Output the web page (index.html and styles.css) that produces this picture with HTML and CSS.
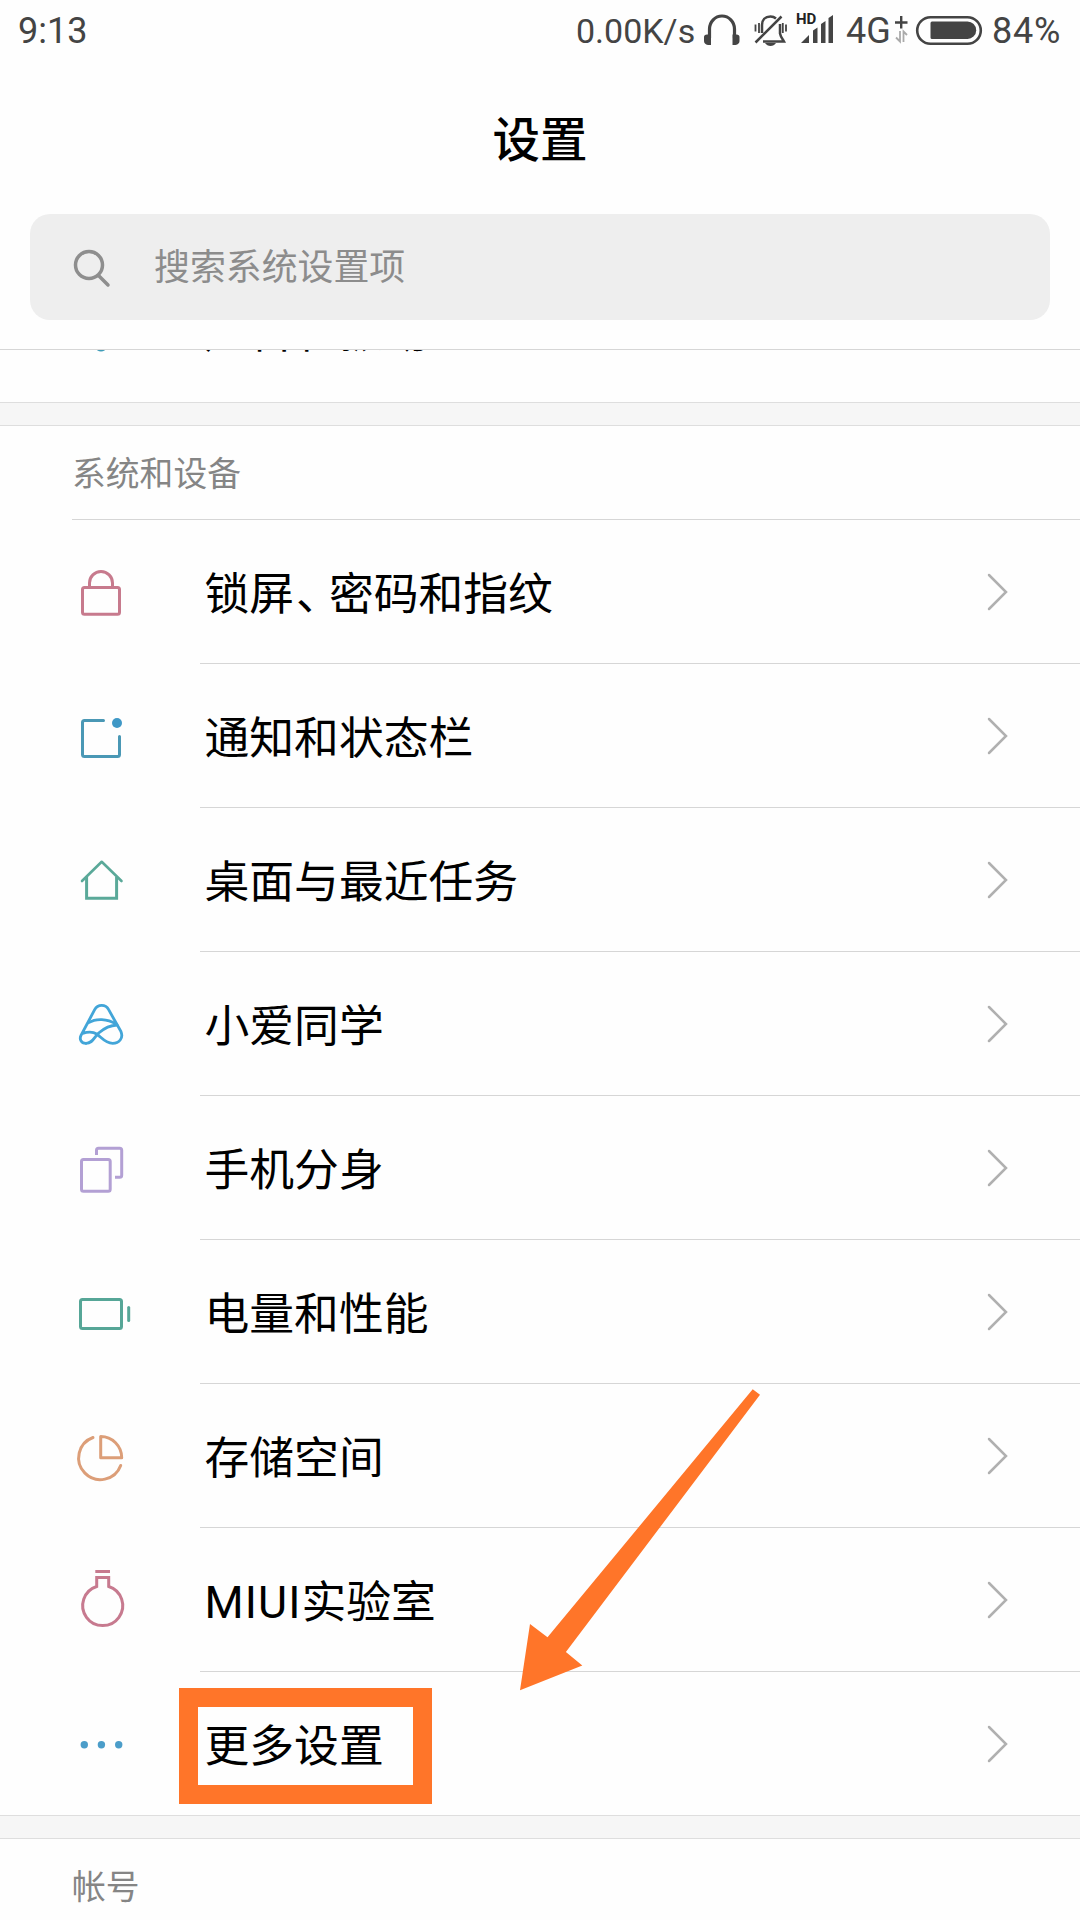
FILE: index.html
```html
<!DOCTYPE html>
<html lang="zh-CN">
<head>
<meta charset="utf-8">
<title>设置</title>
<link rel="stylesheet" href="styles.css">
</head>
<body>
<div class="screen">
  <header class="top">
    <div class="status">
      <span class="time">9:13</span>
      <span class="speed">0.00K/s</span>
      <svg class="s-head" width="44" height="60" viewBox="700 0 44 60"><path d="M709.500 38V29a12.500 13 0 0 1 25 0V38" fill="none" stroke="#444" stroke-width="3.200"/><path d="M704 37q0-2.500 3-2.500h4V45h-3q-4-1-4-4zM739.500 37q0-2.500-3-2.500h-4V45h3q4-1 4-4z" fill="#444"/></svg>
      <svg class="s-bell" width="42" height="60" viewBox="750 0 42 60"><g fill="none" stroke="#444" stroke-width="2.500"><path d="M762 33V25c0-5 3-8.500 8.500-8.500 2.500 0 4 .7 5.500 2M780 24v9.500c1 4.500 2.500 5 4 8H763M755.500 42.500 781.500 16.500"/><path d="M755.500 24.500v7M759 23v10M786 24.500v7M782.800 23v10" stroke-width="1.800"/></g><path d="M765 43h11q-2 3-5.500 3t-5.500-3z" fill="#444"/></svg>
      <svg class="s-signal" width="40" height="60" viewBox="796 0 40 60"><text class="hd" x="796" y="24">HD</text><path d="M801 43l8-8v8zM813 30.500l4.500-3V43H813zM821 24l4.500-3V43H821zM828.500 18l4.500-3V43h-4.500z" fill="#444"/></svg>
      <span class="net">4G</span>
      <svg class="s-data" width="16" height="60" viewBox="893 0 16 60"><path d="M895 22.500h12.500M901.200 16v12.500" stroke="#444" stroke-width="2.400"/><path d="M900 31v10.500l-4-4M903.500 42V31.500l3.500 3.500" fill="none" stroke="#aaa" stroke-width="1.800"/></svg>
      <svg class="s-batt" width="70" height="60" viewBox="914 0 70 60"><rect x="917.200" y="17.200" width="63.600" height="26.600" rx="13.300" fill="none" stroke="#444" stroke-width="2.600"/><path d="M932 21.500H967.500a8.700 8.700 0 0 1 0 17.400H932q-1.500 0-1.500-1.500V23q0-1.500 1.500-1.500z" fill="#444"/></svg>
      <span class="pct">84%</span>
    </div>
    <h1 class="title">设置</h1>
    <div class="search">
      <svg class="glass" width="40" height="40" viewBox="0 0 40 40" fill="none" stroke="#8e8e8e" stroke-width="3.500" stroke-linecap="round"><circle cx="17" cy="17" r="13.500"/><path d="M27 28 36 37"/></svg>
      <span class="placeholder">搜索系统设置项</span>
    </div>
  </header>

  <main class="list">
    <div class="peek">
      <div class="row">
        <svg class="icon" viewBox="0 0 60 61" fill="none" stroke="#3f9cb8" stroke-width="3" stroke-linejoin="round"><path d="M10 24h8l8-12q3-2 6 1v37q-3 2-6 0l-8-9h-8z"/></svg>
        <span class="label">声音和振动</span>
      </div>
    </div>

    <div class="gap"></div>
    <h2 class="section">系统和设备</h2>
    <div class="row">
      <svg class="icon" viewBox="0 0 60 61" fill="none" stroke="#c77a8d" stroke-width="3"><rect x="10.500" y="26.500" width="37" height="26.800" rx="2"/><path d="M17.500 26v-4a11.500 11.500 0 0 1 23 0v4"/></svg>
      <span class="label">锁屏<span class="comma">、</span>密码和指纹</span>
      <svg class="chevron" viewBox="0 0 24 40"><path d="M4 3 21 20 4 37"/></svg>
    </div>
    <div class="row">
      <svg class="icon" viewBox="0 0 60 61" fill="none" stroke="#4a98b5" stroke-width="3" stroke-linecap="round"><path d="M31.500 15.500h-19a2 2 0 0 0-2 2v32a2 2 0 0 0 2 2h33a2 2 0 0 0 2-2V31.500"/><circle cx="45" cy="18" r="5" fill="#3f98c6" stroke="none"/></svg>
      <span class="label">通知和状态栏</span>
      <svg class="chevron" viewBox="0 0 24 40"><path d="M4 3 21 20 4 37"/></svg>
    </div>
    <div class="row">
      <svg class="icon" viewBox="0 0 60 61" fill="none" stroke="#5aa999" stroke-width="3"><path d="M14.600 28v21.300h30V28"/><path d="M10 32 29.700 12.800 49.500 32" stroke-width="2.600" stroke-linecap="round" stroke-linejoin="round"/></svg>
      <span class="label">桌面与最近任务</span>
      <svg class="chevron" viewBox="0 0 24 40"><path d="M4 3 21 20 4 37"/></svg>
    </div>
    <div class="row">
      <svg class="icon" viewBox="0 0 180 183" fill="none" stroke="#42a5d8" stroke-width="8.500" stroke-linecap="round"><path d="M42 151c-16 0-20-14-15-24L68 50c9-17 33-17 42 0l37 66c8 20-6 35-25 35-22 0-34-18-48-28-12-8-26-7-42-2"/><path d="M42 151c20 0 24-18 38-31 14-12 32-23 55-24M50 89c22-14 56-12 82 4"/></svg>
      <span class="label">小爱同学</span>
      <svg class="chevron" viewBox="0 0 24 40"><path d="M4 3 21 20 4 37"/></svg>
    </div>
    <div class="row">
      <svg class="icon" viewBox="0 0 60 61" fill="none" stroke="#b3a0d4" stroke-width="3"><rect x="9.500" y="22.500" width="28.700" height="31.700" rx="2"/><path d="M24.500 18v-4.700a2 2 0 0 1 2-2h21.200a2 2 0 0 1 2 2v25a2 2 0 0 1-2 2H43"/></svg>
      <span class="label">手机分身</span>
      <svg class="chevron" viewBox="0 0 24 40"><path d="M4 3 21 20 4 37"/></svg>
    </div>
    <div class="row">
      <svg class="icon" viewBox="0 0 60 61" fill="none" stroke="#56a697" stroke-width="3"><rect x="8.500" y="18.500" width="41" height="29" rx="2"/><path d="M56.700 26.500v13" stroke-linecap="round"/></svg>
      <span class="label">电量和性能</span>
      <svg class="chevron" viewBox="0 0 24 40"><path d="M4 3 21 20 4 37"/></svg>
    </div>
    <div class="row">
      <svg class="icon" viewBox="0 0 60 61" fill="none" stroke="#dc9e78" stroke-width="3" stroke-linecap="round" stroke-linejoin="round"><path d="M21 12.500A21.700 21.700 0 1 0 48.700 40.500"/><path d="M28.700 11.500V32.700H49.700A21 21.200 0 0 0 28.700 11.500z"/></svg>
      <span class="label">存储空间</span>
      <svg class="chevron" viewBox="0 0 24 40"><path d="M4 3 21 20 4 37"/></svg>
    </div>
    <div class="row">
      <svg class="icon" viewBox="0 0 60 61" fill="none" stroke="#c77a8f" stroke-width="3"><path d="M23.300 2.500H38M24.700 17.500V8.500h12v9A20 20 0 1 1 24.700 17.500z"/></svg>
      <span class="label"><span class="latin">MIUI</span>实验室</span>
      <svg class="chevron" viewBox="0 0 24 40"><path d="M4 3 21 20 4 37"/></svg>
    </div>
    <div class="row last">
      <svg class="icon" viewBox="0 0 60 61" fill="#4b9dc9"><circle cx="12.300" cy="31.700" r="3.700"/><circle cx="29.400" cy="31.700" r="3.700"/><circle cx="46.700" cy="31.700" r="3.700"/></svg>
      <span class="label">更多设置</span>
      <svg class="chevron" viewBox="0 0 24 40"><path d="M4 3 21 20 4 37"/></svg>
    </div>

    <div class="gap"></div>
    <h2 class="section">帐号</h2>
  </main>

  <div class="highlight"></div>
  <svg class="arrow" width="244" height="304" viewBox="518 1388 244 304"><path d="M752.700 1389.300 760 1394.700 565.900 1652 582.300 1665.500 520 1690.300 530 1624 547.500 1637.300z" fill="#ff7529"/></svg>
</div>
</body>
</html>
```
FILE: styles.css
```css
* { box-sizing: border-box; }

body {
  margin: 0;
  background: #fefefe;
  font-family: Roboto, "Noto Sans CJK SC", sans-serif;
}

h1, h2 { margin: 0; }
svg { display: block; flex: none; }

.screen {
  position: relative;
  width: 1080px;
  height: 1920px;
  overflow: hidden;
  background: #fefefe;
}

/* Status bar, title and search field */
.top {
  height: 350px;
  border-bottom: 1px solid #d6d6d6;
}

.status {
  display: flex;
  height: 60px;
  padding-left: 18px;
  color: #444;
  font-size: 35px;
  line-height: 63px;
  white-space: nowrap;
}

.time { width: 558px; font-size: 36px; }
.speed { width: 124px; font-size: 34px; }
.s-bell { margin-left: 6px; }
.s-signal { margin-left: 4px; }
.net { width: 47px; margin-left: 10px; font-size: 36px; }
.s-batt { margin-left: 5px; }
.pct { margin-left: 8px; font-size: 36px; letter-spacing: 0.8px; }
.hd { font: bold 15px Roboto, sans-serif; fill: #222; }

.title {
  height: 154px;
  color: #000;
  font-size: 47.500px;
  font-weight: 500;
  line-height: 163px;
  text-align: center;
}

.search {
  display: flex;
  align-items: center;
  height: 106px;
  margin: 0 30px;
  padding-left: 42px;
  border-radius: 20px;
  background: #eee;
  color: #8c8c8c;
}

.glass { margin-top: 2px; }

.placeholder {
  margin-left: 42px;
  padding-top: 2px;
  font-size: 35.900px;
  line-height: 60px;
}

/* Settings list */
.peek {
  display: flex;
  flex-direction: column;
  justify-content: flex-end;
  height: 52px;
  overflow: hidden;
}

.gap {
  height: 24px;
  border: solid #dedede;
  border-width: 1px 0;
  background: #f6f6f6;
}

.section {
  height: 94px;
  margin-left: 72px;
  border-bottom: 1px solid #d6d6d6;
  color: #858585;
  font-size: 33.800px;
  font-weight: 400;
  line-height: 97px;
}

.row {
  position: relative;
  display: flex;
  flex: none;
  align-items: center;
  height: 144px;
  padding: 0 71px 1px 72px;
}

.row::after {
  content: "";
  position: absolute;
  right: 0;
  bottom: 0;
  left: 200px;
  height: 1px;
  background: #d6d6d6;
}

.peek .row::after, .last::after { display: none; }
.last { height: 143px; padding-bottom: 0; }

.icon { width: 60px; height: 61px; }

.label {
  flex: 1;
  margin-left: 72.500px;
  padding-top: 7px;
  color: #000;
  font-size: 44.800px;
  line-height: 60px;
}

.comma { margin-left: 2px; letter-spacing: -12px; }
.latin { letter-spacing: 1.100px; }

.chevron {
  width: 24px;
  height: 40px;
  fill: none;
  stroke: #b0b0b0;
  stroke-width: 2.500;
  stroke-linecap: round;
}

/* Callout marks lying over the list */
.highlight {
  position: absolute;
  top: 1688px;
  left: 179px;
  width: 253px;
  height: 116px;
  border: 19px solid #ff7529;
}

.arrow {
  position: absolute;
  top: 1388px;
  left: 518px;
}
```
